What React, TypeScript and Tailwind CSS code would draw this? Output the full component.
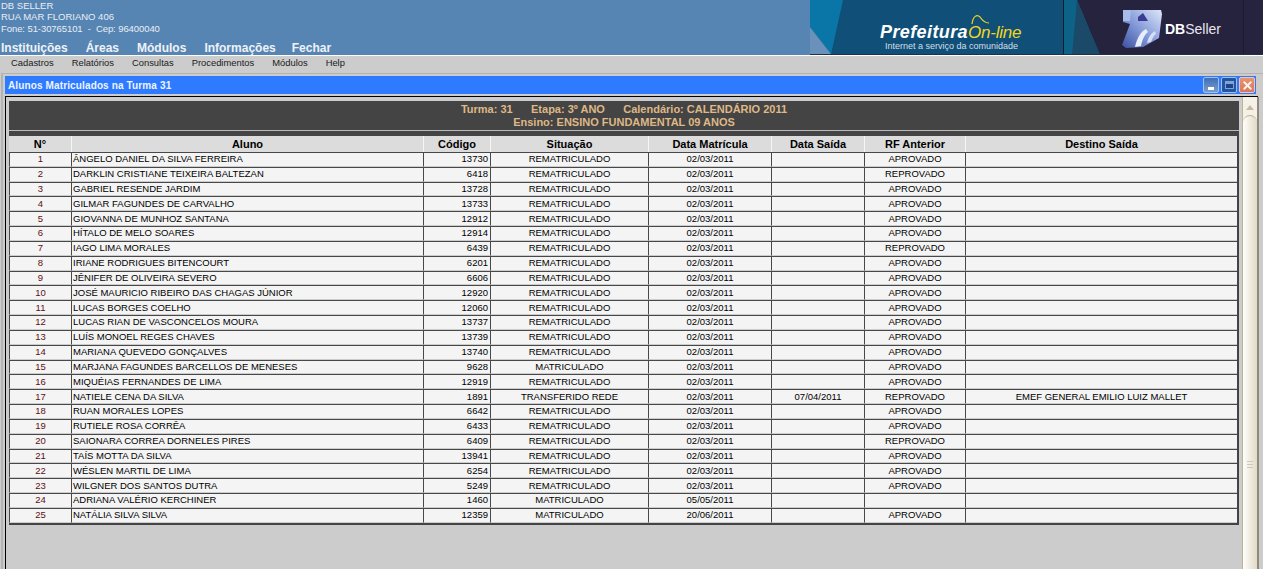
import { X } from 'lucide-react';

type Aluno = {
  nome: string;
  codigo: string;
  situacao: string;
  matricula: string;
  saida?: string;
  rf: string;
  destino?: string;
};

const alunos: Aluno[] = [
  { nome: 'ÂNGELO DANIEL DA SILVA FERREIRA', codigo: '13730', situacao: 'REMATRICULADO', matricula: '02/03/2011', rf: 'APROVADO' },
  { nome: 'DARKLIN CRISTIANE TEIXEIRA BALTEZAN', codigo: '6418', situacao: 'REMATRICULADO', matricula: '02/03/2011', rf: 'REPROVADO' },
  { nome: 'GABRIEL RESENDE JARDIM', codigo: '13728', situacao: 'REMATRICULADO', matricula: '02/03/2011', rf: 'APROVADO' },
  { nome: 'GILMAR FAGUNDES DE CARVALHO', codigo: '13733', situacao: 'REMATRICULADO', matricula: '02/03/2011', rf: 'APROVADO' },
  { nome: 'GIOVANNA DE MUNHOZ SANTANA', codigo: '12912', situacao: 'REMATRICULADO', matricula: '02/03/2011', rf: 'APROVADO' },
  { nome: 'HÍTALO DE MELO SOARES', codigo: '12914', situacao: 'REMATRICULADO', matricula: '02/03/2011', rf: 'APROVADO' },
  { nome: 'IAGO LIMA MORALES', codigo: '6439', situacao: 'REMATRICULADO', matricula: '02/03/2011', rf: 'REPROVADO' },
  { nome: 'IRIANE RODRIGUES BITENCOURT', codigo: '6201', situacao: 'REMATRICULADO', matricula: '02/03/2011', rf: 'APROVADO' },
  { nome: 'JÊNIFER DE OLIVEIRA SEVERO', codigo: '6606', situacao: 'REMATRICULADO', matricula: '02/03/2011', rf: 'APROVADO' },
  { nome: 'JOSÉ MAURICIO RIBEIRO DAS CHAGAS JÚNIOR', codigo: '12920', situacao: 'REMATRICULADO', matricula: '02/03/2011', rf: 'APROVADO' },
  { nome: 'LUCAS BORGES COELHO', codigo: '12060', situacao: 'REMATRICULADO', matricula: '02/03/2011', rf: 'APROVADO' },
  { nome: 'LUCAS RIAN DE VASCONCELOS MOURA', codigo: '13737', situacao: 'REMATRICULADO', matricula: '02/03/2011', rf: 'APROVADO' },
  { nome: 'LUÍS MONOEL REGES CHAVES', codigo: '13739', situacao: 'REMATRICULADO', matricula: '02/03/2011', rf: 'APROVADO' },
  { nome: 'MARIANA QUEVEDO GONÇALVES', codigo: '13740', situacao: 'REMATRICULADO', matricula: '02/03/2011', rf: 'APROVADO' },
  { nome: 'MARJANA FAGUNDES BARCELLOS DE MENESES', codigo: '9628', situacao: 'MATRICULADO', matricula: '02/03/2011', rf: 'APROVADO' },
  { nome: 'MIQUÉIAS FERNANDES DE LIMA', codigo: '12919', situacao: 'REMATRICULADO', matricula: '02/03/2011', rf: 'APROVADO' },
  { nome: 'NATIELE CENA DA SILVA', codigo: '1891', situacao: 'TRANSFERIDO REDE', matricula: '02/03/2011', saida: '07/04/2011', rf: 'REPROVADO', destino: 'EMEF GENERAL EMILIO LUIZ MALLET' },
  { nome: 'RUAN MORALES LOPES', codigo: '6642', situacao: 'REMATRICULADO', matricula: '02/03/2011', rf: 'APROVADO' },
  { nome: 'RUTIELE ROSA CORRÊA', codigo: '6433', situacao: 'REMATRICULADO', matricula: '02/03/2011', rf: 'APROVADO' },
  { nome: 'SAIONARA CORREA DORNELES PIRES', codigo: '6409', situacao: 'REMATRICULADO', matricula: '02/03/2011', rf: 'REPROVADO' },
  { nome: 'TAÍS MOTTA DA SILVA', codigo: '13941', situacao: 'REMATRICULADO', matricula: '02/03/2011', rf: 'APROVADO' },
  { nome: 'WÉSLEN MARTIL DE LIMA', codigo: '6254', situacao: 'REMATRICULADO', matricula: '02/03/2011', rf: 'APROVADO' },
  { nome: 'WILGNER DOS SANTOS DUTRA', codigo: '5249', situacao: 'REMATRICULADO', matricula: '02/03/2011', rf: 'APROVADO' },
  { nome: 'ADRIANA VALÉRIO KERCHINER', codigo: '1460', situacao: 'MATRICULADO', matricula: '05/05/2011', rf: '' },
  { nome: 'NATÁLIA SILVA SILVA', codigo: '12359', situacao: 'MATRICULADO', matricula: '20/06/2011', rf: 'APROVADO' },
];

const topMenu = ['Instituições', 'Áreas', 'Módulos', 'Informações', 'Fechar'];
const subMenu = ['Cadastros', 'Relatórios', 'Consultas', 'Procedimentos', 'Módulos', 'Help'];
const colunas = ['N°', 'Aluno', 'Código', 'Situação', 'Data Matrícula', 'Data Saída', 'RF Anterior', 'Destino Saída'];

const rowGrid = 'grid grid-cols-[62px_352px_67px_158px_123px_93px_101px_1fr]';
const cell = 'flex items-center justify-center border-t border-l border-t-[#484848] border-l-[#484848] border-b border-b-[#ccc] overflow-hidden';

const Banner = () => (
  <svg width="453" height="55" viewBox="0 0 453 55" className="shrink-0">
    <defs>
      <linearGradient id="dbLogo" x1="1" y1="0" x2="0" y2="1">
        <stop offset="0" stopColor="#dfe6f8" />
        <stop offset="0.55" stopColor="#7f97d8" />
        <stop offset="1" stopColor="#3c4f9e" />
      </linearGradient>
      <filter id="soft">
        <feGaussianBlur stdDeviation="0.5" />
      </filter>
    </defs>
    <rect width="453" height="55" fill="#105078" />
    <polygon points="0,0 33,0 21,54 0,27" fill="#0a76a8" />
    <polygon points="0,27 21,54 0,54" fill="#6a91ba" />
    <rect x="253" width="1" height="55" fill="#0b1c30" />
    <rect x="254" width="199" height="55" fill="#26233f" />
    <polygon points="254,0 267,0 290,55 254,55" fill="#0d6288" />
    <polygon points="267,0 290,55 262,55" fill="#1a4a68" />
    <rect x="433" width="1" height="55" fill="#1c1a30" />
    <rect y="54" width="453" height="1" fill="#20304a" />
    {/* marca DBSeller */}
    <g filter="url(#soft)">
      <path d="M313 10 L351 10 L352 14 L349 38 L333 47 L316 48 L312 45 L320 24 L313 22 Z" fill="url(#dbLogo)" />
      <path d="M328 17 L333 13 L338 21 L328 21 Z" fill="#3a3a94" />
      <path d="M325 47 C327 38 331 31 336 29 L338 32 C334 35 332 41 331 46 Z" fill="#e8edfa" />
      <path d="M337 43 C338 38 341 33 345 31 L346 34 C343 36 342 40 341 42 Z" fill="#d5def5" />
      <path d="M313 10 L321 10 L320 21 L313 21 Z" fill="#a8bbea" />
    </g>
    {/* onda do On-line */}
    <path d="M162 24 C163 16 167 14 170 17 C172 20 175 23 179 23" fill="none" stroke="#f2d61e" strokeWidth="1.2" />
  </svg>
);

const Scrollbar = () => (
  <div className="w-[17px] shrink-0 flex flex-col border-l border-l-[#bdb397] border-r-2 border-r-[#8f8a7a] bg-[#f5f1e6]">
    <div className="h-[18px] flex items-start justify-center pt-[8px]">
      <div className="w-0 h-0 border-l-[4px] border-r-[4px] border-b-[5px] border-l-transparent border-r-transparent border-b-[#c4bba6]" />
    </div>
    <div className="flex-1 rounded-t-[7px] border-t border-[#bdb397] bg-gradient-to-r from-[#fffefb] to-[#e2dac8] flex flex-col items-center pt-[345px] gap-[2px]">
      <div className="w-[6px] h-px bg-[#cfc7b2]" />
      <div className="w-[6px] h-px bg-[#cfc7b2]" />
      <div className="w-[6px] h-px bg-[#cfc7b2]" />
    </div>
  </div>
);

export default function App() {
  return (
    <div className="h-[569px] w-full overflow-hidden bg-[#cccccc] font-['Liberation_Sans',Arial,sans-serif]">
      <header className="h-[55px] flex bg-[#5785b3]">
        <div className="flex-1 min-w-0 pl-[1px] flex flex-col">
          <div className="text-[9.5px] leading-[11px] text-[#e8eef5]">
            <p>DB SELLER</p>
            <p>RUA MAR FLORIANO 406</p>
            <p className="mt-px tracking-[-0.08px]">Fone: 51-30765101 &nbsp;-&nbsp; Cep: 96400040</p>
          </div>
          <nav className="mt-[8px] flex gap-[18px] text-[12px] leading-[13px] font-bold text-[#eef2f7]">
            {topMenu.map((m) => (
              <span key={m} className="last:-ml-[2px]">{m}</span>
            ))}
          </nav>
        </div>
        <div className="relative w-[453px] shrink-0">
          <Banner />
          <div className="absolute left-[70px] top-[22px] flex items-baseline">
            <span className="text-[18px] leading-[20px] font-bold italic text-white tracking-[0.4px]">Prefeitura</span>
            <span className="text-[17px] leading-[20px] italic text-[#f2d61e] tracking-[-0.25px]">On-line</span>
          </div>
          <div className="absolute left-[75px] top-[41px] text-[9px] leading-[11px] text-[#d5dde6]">
            Internet a serviço da comunidade
          </div>
          <div className="absolute left-[355px] top-[22px] text-[14px] leading-[15px] text-[#e6e6ee]">
            <span className="font-bold text-white">DB</span>Seller
          </div>
        </div>
      </header>

      <nav className="h-[15px] flex items-center pl-[11px] gap-[18px] border-t border-t-white text-[9.4px] text-[#1a1a1a] bg-[#cccccc]">
        {subMenu.map((m) => (
          <span key={m}>{m}</span>
        ))}
      </nav>

      <div className="mt-[3px] ml-[1px] h-[500px] border-t border-l-2 border-[#b3b3b3] pl-[2px]">
        <div className="h-[18px] mt-[2px] mr-[7px] flex items-center justify-between bg-[#2f7bff] pl-[3px] pr-[1px]">
          <span className="text-[10px] font-bold tracking-[0.13px] text-[#eef4ff]">Alunos Matriculados na Turma 31</span>
          <div className="flex gap-[2px]">
            <button className="w-[16px] h-[16px] flex items-end justify-center rounded-[2px] border border-[#9fc0f5] bg-gradient-to-b from-[#3f6fb8] to-[#7b9cc8] pb-[2px]">
              <span className="w-[6px] h-[3px] bg-white" />
            </button>
            <button className="w-[16px] h-[16px] flex items-center justify-center rounded-[2px] border border-[#9fc0f5] bg-[#24549e]">
              <span className="w-[9px] h-[8px] border border-[#7fa2d8] border-t-[3px] bg-[#1c4488]" />
            </button>
            <button className="w-[16px] h-[16px] flex items-center justify-center rounded-[2px] border border-[#f0c3b3] bg-gradient-to-b from-[#e8946f] to-[#d9775e]">
              <X size={13} strokeWidth={3.5} className="text-[#fff4ee]" />
            </button>
          </div>
        </div>

        <div className="mt-[2px] mr-[5px] flex h-[480px] border-t border-l border-black">
          <div className="w-[1236px] shrink-0 pl-[3px] pr-[3px] pt-[4px]">
            <div className="bg-[#444444] pb-[5px]">
              <div className="h-[30px] border-b border-b-[#bbb] flex flex-col items-center justify-center text-[11px] leading-[13px] font-bold text-[#deb887]">
                <p className="whitespace-pre">Turma: 31      Etapa: 3º ANO      Calendário: CALENDÁRIO 2011</p>
                <p>Ensino: ENSINO FUNDAMENTAL 09 ANOS</p>
              </div>
            </div>
            <div className="border-r-2 border-b-2 border-[#444]">
              <div className={`${rowGrid} h-[16px] bg-[#dcdcdc] text-[11px] font-bold text-black`}>
                {colunas.map((c, i) => (
                  <div key={c} className={`flex items-center justify-center ${i === 0 ? '' : 'border-l border-l-[#f5f5f5]'}`}>
                    {c}
                  </div>
                ))}
              </div>
              {alunos.map((a, i) => (
                <div key={a.nome} className={`${rowGrid} h-[14.83px] bg-[#f4f4f4] text-[9.5px] text-black`}>
                  <div className={`${cell} text-[#5c1010]`}>{i + 1}</div>
                  <div className={`${cell} !justify-start pl-[1px]`}>{a.nome}</div>
                  <div className={`${cell} !justify-end pr-[2px]`}>{a.codigo}</div>
                  <div className={cell}>{a.situacao}</div>
                  <div className={cell}>{a.matricula}</div>
                  <div className={cell}>{a.saida}</div>
                  <div className={cell}>{a.rf}</div>
                  <div className={cell}>{a.destino}</div>
                </div>
              ))}
            </div>
          </div>
          <Scrollbar />
        </div>
      </div>
    </div>
  );
}
